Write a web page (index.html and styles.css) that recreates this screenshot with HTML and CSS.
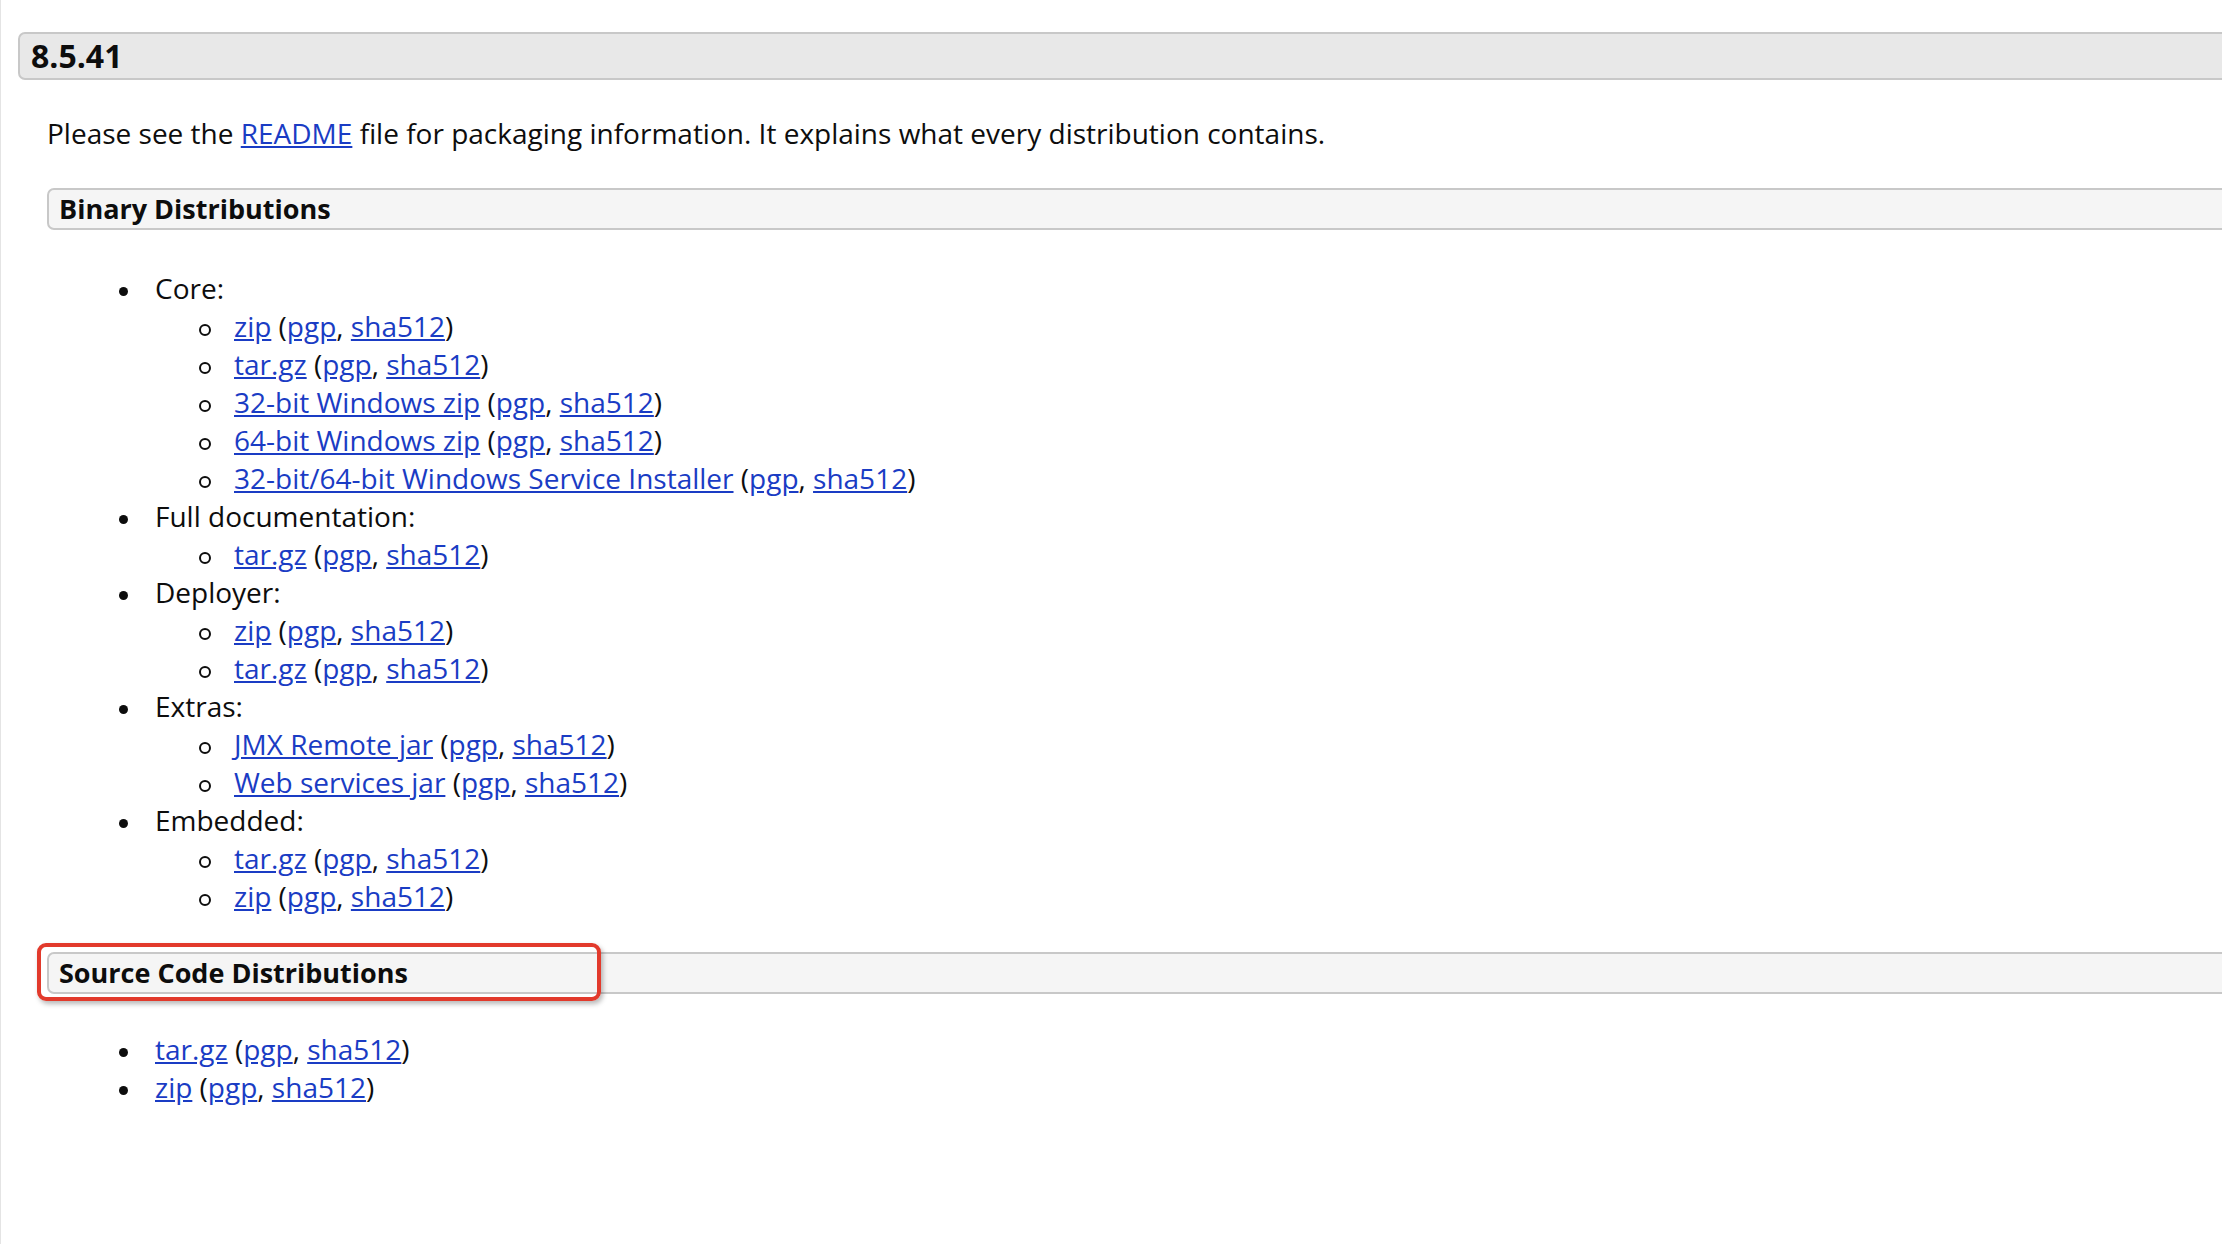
FILE: index.html
```html
<!DOCTYPE html>
<html>
<head>
<meta charset="utf-8">
<link rel="stylesheet" href="styles.css">
</head>
<body>
<div class="page">
  <h3 class="version">8.5.41</h3>
  <div class="section-body">
    <p class="intro">Please see the <a href="#">README</a> file for packaging information. It explains what every distribution contains.</p>

    <h4 class="sub">Binary Distributions</h4>
    <ul class="dist">
      <li>Core:
        <ul class="files">
          <li><a href="#">zip</a> (<a href="#">pgp</a>, <a href="#">sha512</a>)</li>
          <li><a href="#">tar.gz</a> (<a href="#">pgp</a>, <a href="#">sha512</a>)</li>
          <li><a href="#">32-bit Windows zip</a> (<a href="#">pgp</a>, <a href="#">sha512</a>)</li>
          <li><a href="#">64-bit Windows zip</a> (<a href="#">pgp</a>, <a href="#">sha512</a>)</li>
          <li><a href="#">32-bit/64-bit Windows Service Installer</a> (<a href="#">pgp</a>, <a href="#">sha512</a>)</li>
        </ul>
      </li>
      <li>Full documentation:
        <ul class="files">
          <li><a href="#">tar.gz</a> (<a href="#">pgp</a>, <a href="#">sha512</a>)</li>
        </ul>
      </li>
      <li>Deployer:
        <ul class="files">
          <li><a href="#">zip</a> (<a href="#">pgp</a>, <a href="#">sha512</a>)</li>
          <li><a href="#">tar.gz</a> (<a href="#">pgp</a>, <a href="#">sha512</a>)</li>
        </ul>
      </li>
      <li>Extras:
        <ul class="files">
          <li><a href="#">JMX Remote jar</a> (<a href="#">pgp</a>, <a href="#">sha512</a>)</li>
          <li><a href="#">Web services jar</a> (<a href="#">pgp</a>, <a href="#">sha512</a>)</li>
        </ul>
      </li>
      <li>Embedded:
        <ul class="files">
          <li><a href="#">tar.gz</a> (<a href="#">pgp</a>, <a href="#">sha512</a>)</li>
          <li><a href="#">zip</a> (<a href="#">pgp</a>, <a href="#">sha512</a>)</li>
        </ul>
      </li>
    </ul>

    <div class="sub-wrap">
      <h4 class="sub">Source Code Distributions</h4>
      <div class="highlight"></div>
    </div>
    <ul class="dist source">
      <li><a href="#">tar.gz</a> (<a href="#">pgp</a>, <a href="#">sha512</a>)</li>
      <li><a href="#">zip</a> (<a href="#">pgp</a>, <a href="#">sha512</a>)</li>
    </ul>
  </div>
</div>
</body>
</html>
```

FILE: styles.css
```css
html, body {
  margin: 0;
  padding: 0;
  background: #ffffff;
  overflow: hidden;
}

body {
  font-family: "Open Sans", "Liberation Sans", sans-serif;
  font-size: 28px;
  line-height: 38px;
  color: #0d0d0d;
}

.page {
  border-left: 1px solid #e4e4e4;
  min-height: 1244px;
  box-sizing: border-box;
  padding-top: 32px;
}

.version {
  margin: 0 -40px 0 17px;
  height: 44px;
  line-height: 44px;
  padding: 0 11px;
  font-size: 32px;
  font-weight: 700;
  background: #e8e8e8;
  border: 2px solid #c8c8c8;
  border-radius: 7px;
}

.section-body {
  padding-left: 46px;
}

.intro {
  margin: 34px 0 36px;
  white-space: nowrap;
}

a {
  color: #1a3cc4;
  text-decoration: underline;
}

.sub-wrap {
  position: relative;
}

.sub {
  margin: 0 -40px 0 0;
  height: 38px;
  line-height: 38px;
  padding: 0 10px;
  font-size: 27px;
  font-weight: 700;
  background: #f5f5f5;
  border: 2px solid #c8c8c8;
  border-radius: 7px;
}

.highlight {
  position: absolute;
  left: -10px;
  top: -9px;
  width: 556px;
  height: 50px;
  border: 4px solid #e23a2c;
  border-radius: 9px;
  box-shadow: 2px 3px 5px rgba(0, 0, 0, 0.28);
}

.dist {
  margin: 39px 0 37px;
  padding-left: 108px;
  list-style: none;
}

.dist.source {
  margin-top: 36px;
}

.dist > li::before {
  content: "";
  display: inline-block;
  width: 9px;
  height: 9px;
  border-radius: 50%;
  background: #0d0d0d;
  margin-left: -36px;
  margin-right: 27px;
  vertical-align: middle;
}

.files {
  margin: 0;
  padding-left: 79px;
  list-style: none;
}

.files > li::before {
  content: "";
  display: inline-block;
  box-sizing: border-box;
  width: 12px;
  height: 12px;
  border-radius: 50%;
  border: 2px solid #0d0d0d;
  background: transparent;
  margin-left: -35px;
  margin-right: 23px;
  vertical-align: middle;
}

li {
  white-space: nowrap;
}
```
